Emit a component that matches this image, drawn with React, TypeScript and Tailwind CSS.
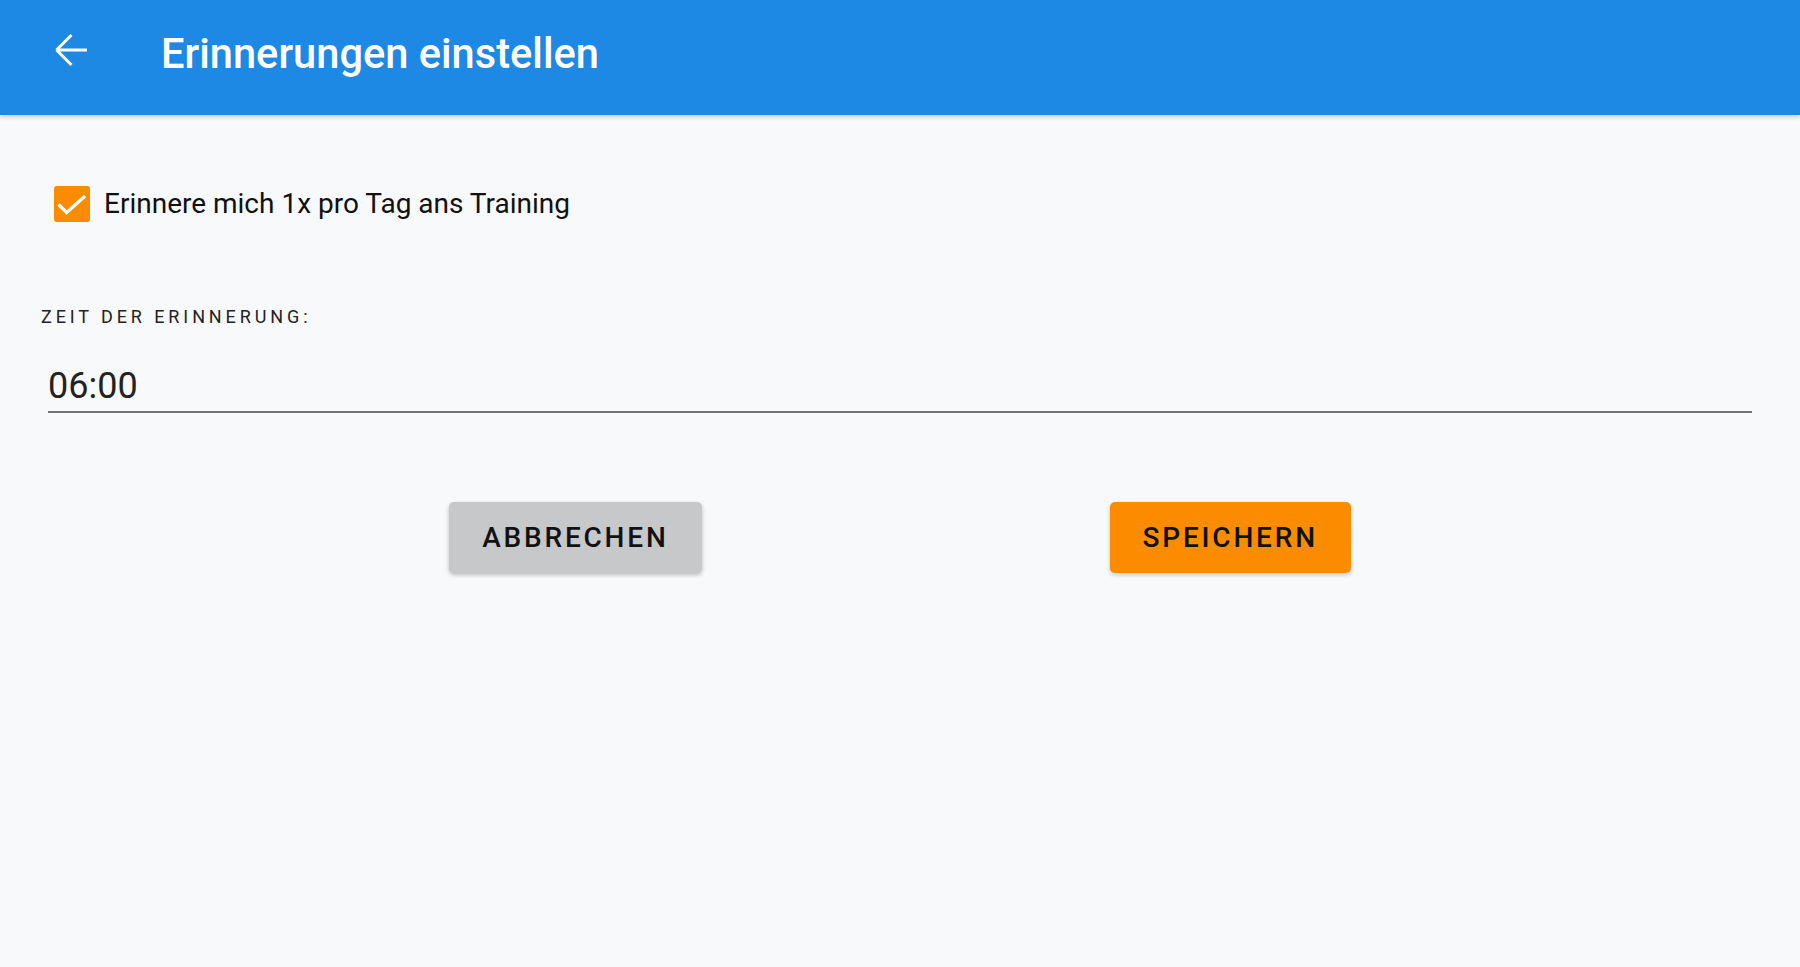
import React from "react";

export default function App() {
  return (
    <div
      className="w-[1800px] h-[967px] bg-[#f8f9fb] flex flex-col overflow-hidden"
      style={{ fontFamily: "Roboto, 'Liberation Sans', sans-serif" }}
    >
      <header className="h-[115px] shrink-0 bg-[#1e88e5] flex items-start shadow-[0_2px_5px_rgba(0,0,0,0.18)] relative z-10">
        <div className="ml-[54px] mt-[33px] w-[34px] h-[34px]">
          <svg width="34" height="34" viewBox="0 0 34 34" fill="none">
            <path
              d="M33 17H2.5M2.5 17L17.5 2M2.5 17L17.5 32"
              stroke="white"
              strokeWidth="3"
              strokeLinecap="butt"
              strokeLinejoin="miter"
            />
          </svg>
        </div>
        <h1 className="ml-[73px] mt-[30px] text-[41.6px] leading-[48px] font-medium text-white">
          Erinnerungen einstellen
        </h1>
      </header>

      <main className="flex flex-col pt-[70px]">
        <label className="ml-[54px] flex items-center gap-[14px]">
          <span className="w-[36px] h-[36px] rounded-[3px] bg-[#fb8c00] flex items-center justify-center">
            <svg width="36" height="36" viewBox="0 0 36 36" fill="none">
              <path
                d="M4.5 18.5L12.7 26.5L31 10"
                stroke="white"
                strokeWidth="3.2"
              />
            </svg>
          </span>
          <span className="text-[28px] leading-[37px] text-[#111111]">
            Erinnere mich 1x pro Tag ans Training
          </span>
        </label>

        <div className="ml-[41px] mt-[86px] text-[18px] leading-[18px] tracking-[3.9px] text-[#222222]">
          ZEIT DER ERINNERUNG:
        </div>

        <div className="mx-[48px] mt-[39px] border-b-2 border-[#757575] pb-[4px]">
          <div className="text-[36px] leading-[42px] text-[#222222]">06:00</div>
        </div>

        <div className="mx-[48px] mt-[89px] flex justify-center gap-[408px]">
          <button className="h-[71px] px-[33px] rounded-[5px] bg-[#c7c8ca] text-[28px] font-medium tracking-[2.8px] text-[#111111] shadow-[0_2px_4px_rgba(0,0,0,0.25)]">
            ABBRECHEN
          </button>
          <button className="h-[71px] px-[33px] rounded-[5px] bg-[#fb8c00] text-[28px] font-medium tracking-[2.8px] text-[#111111] shadow-[0_2px_4px_rgba(0,0,0,0.2)]">
            SPEICHERN
          </button>
        </div>
      </main>
    </div>
  );
}
